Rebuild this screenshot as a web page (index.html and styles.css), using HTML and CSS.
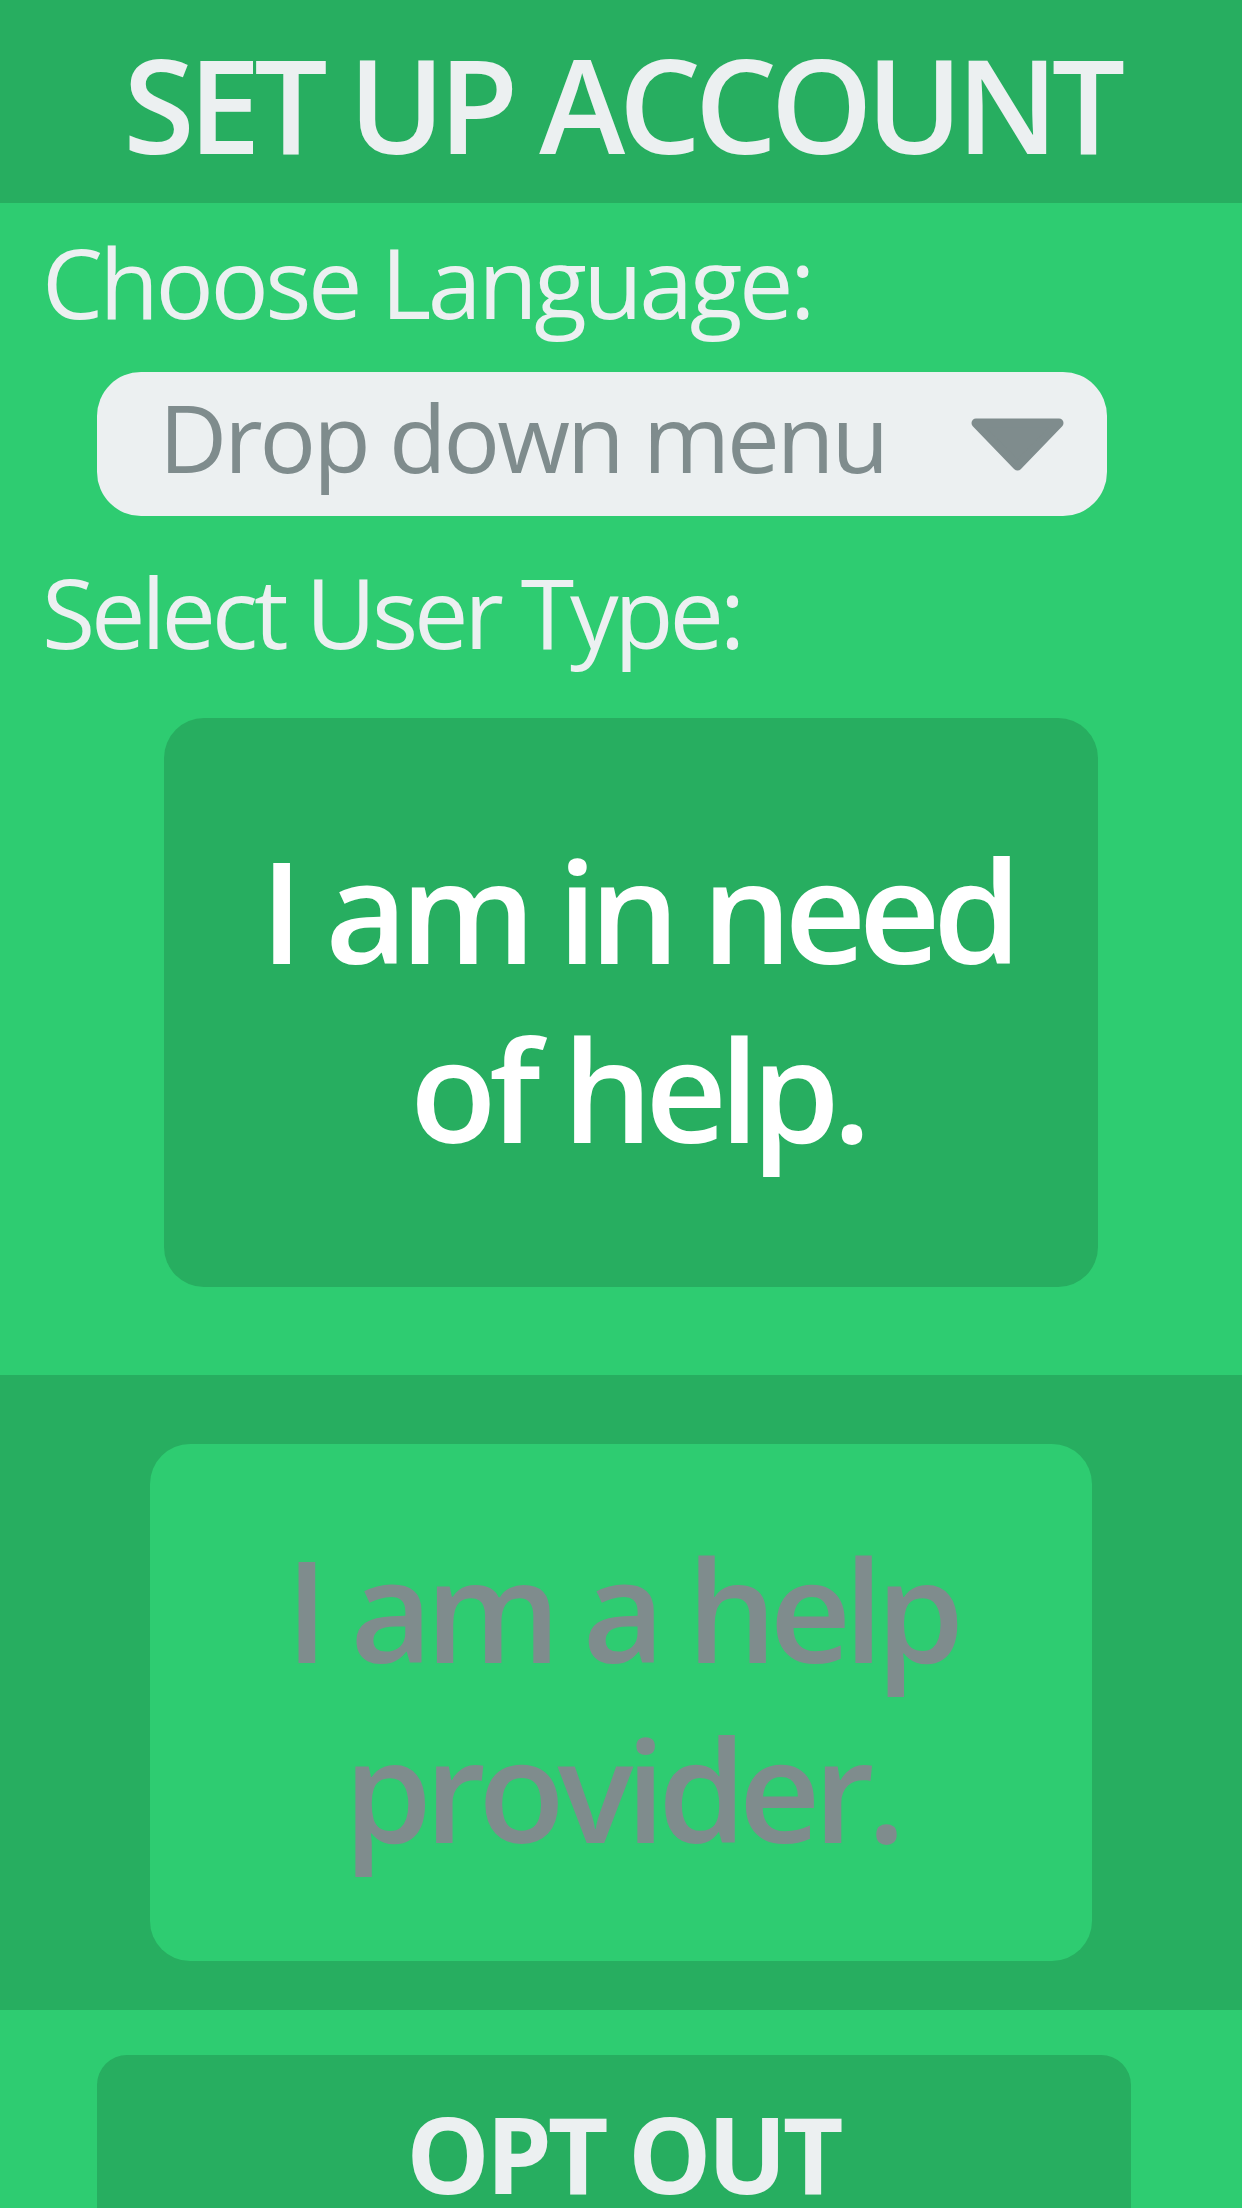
FILE: index.html
```html
<!DOCTYPE html>
<html lang="en">
<head>
<meta charset="utf-8">
<title>Set Up Account</title>
<link rel="stylesheet" href="styles.css">
</head>
<body>
<div class="screen">
  <header class="topbar">
    <h1 class="title">SET UP ACCOUNT</h1>
  </header>

  <section class="setup">
    <p class="label label-lang">Choose Language:</p>
    <div class="dropdown">
      <span class="dropdown-text">Drop down menu</span>
      <svg class="caret" width="95" height="53" viewBox="0 0 95 53" aria-hidden="true">
        <path d="M6 5 L89 5 L47.5 48 Z" fill="#7f8c8d" stroke="#7f8c8d" stroke-width="9" stroke-linejoin="round"/>
      </svg>
    </div>
    <p class="label label-type">Select User Type:</p>
    <div class="choice choice-need">
      <p class="choice-text"><span class="line">I am in need</span><span class="line">of help.</span></p>
    </div>
  </section>

  <section class="provider-band">
    <div class="choice choice-provider">
      <p class="choice-text"><span class="line">I am a help</span><span class="line">provider.</span></p>
    </div>
  </section>

  <footer class="bottom">
    <div class="optout">OPT OUT</div>
  </footer>
</div>
</body>
</html>
```

FILE: styles.css
```css
html, body {
  margin: 0;
  padding: 0;
  height: 2208px;
  overflow: hidden;
  background: #2ecc71;
}

.screen {
  width: 1242px;
  display: flex;
  flex-direction: column;
  font-family: "Open Sans", "Noto Sans", sans-serif;
}

.topbar {
  height: 203px;
  background: #27ae60;
  display: flex;
  align-items: center;
  justify-content: center;
}

.title {
  margin: 0;
  padding-top: 5px;
  font-size: 130px;
  line-height: 1;
  font-weight: 600;
  letter-spacing: -6.5px;
  color: #ecf0f1;
}

.setup {
  background: #2ecc71;
  display: flex;
  flex-direction: column;
  padding-bottom: 88px;
}

.label {
  margin: 0;
  font-size: 97px;
  line-height: 1;
  font-weight: 400;
  letter-spacing: -3.5px;
  color: #ecf0f1;
  padding-left: 42px;
}

.label-lang {
  margin-top: 30px;
}

.dropdown {
  margin: 42px 135px 0 97px;
  height: 144px;
  box-sizing: border-box;
  background: #ecf0f1;
  border-radius: 44px;
  display: flex;
  align-items: center;
  justify-content: space-between;
  padding: 0 42px 0 62px;
}

.dropdown-text {
  font-size: 94px;
  line-height: 1;
  letter-spacing: -3px;
  color: #7f8c8d;
  padding-bottom: 15px;
}

.caret {
  display: block;
}

.label-type {
  margin-top: 47px;
  letter-spacing: -4.2px;
}

.choice {
  display: flex;
  align-items: center;
  justify-content: center;
  text-align: center;
  box-sizing: border-box;
  border-radius: 40px;
}

.choice-text {
  margin: 0;
  display: flex;
  flex-direction: column;
  align-items: center;
  font-size: 142px;
  font-weight: 600;
  letter-spacing: -7.5px;
}

.line {
  display: block;
  height: 179px;
  line-height: 179px;
}

.choice-need {
  margin: 58px 144px 0 164px;
  height: 569px;
  background: #27ae60;
  color: #ffffff;
  padding: 0 0 8px 12px;
}

.provider-band {
  background: #27ae60;
  padding: 69px 150px 49px 150px;
}

.choice-provider {
  height: 517px;
  background: #2ecc71;
  color: #7f8c8d;
  padding-bottom: 10px;
}

.choice-provider .line {
  height: 180px;
  line-height: 180px;
}

.bottom {
  height: 198px;
  overflow: hidden;
  background: #2ecc71;
  padding: 45px 111px 0 97px;
  box-sizing: border-box;
}

.optout {
  height: 200px;
  background: #27ae60;
  border-radius: 30px;
  box-sizing: border-box;
  padding-top: 52px;
  padding-left: 18px;
  text-align: center;
  font-size: 105px;
  line-height: 0.9;
  font-weight: 700;
  letter-spacing: -4px;
  color: #ecf0f1;
}
```
